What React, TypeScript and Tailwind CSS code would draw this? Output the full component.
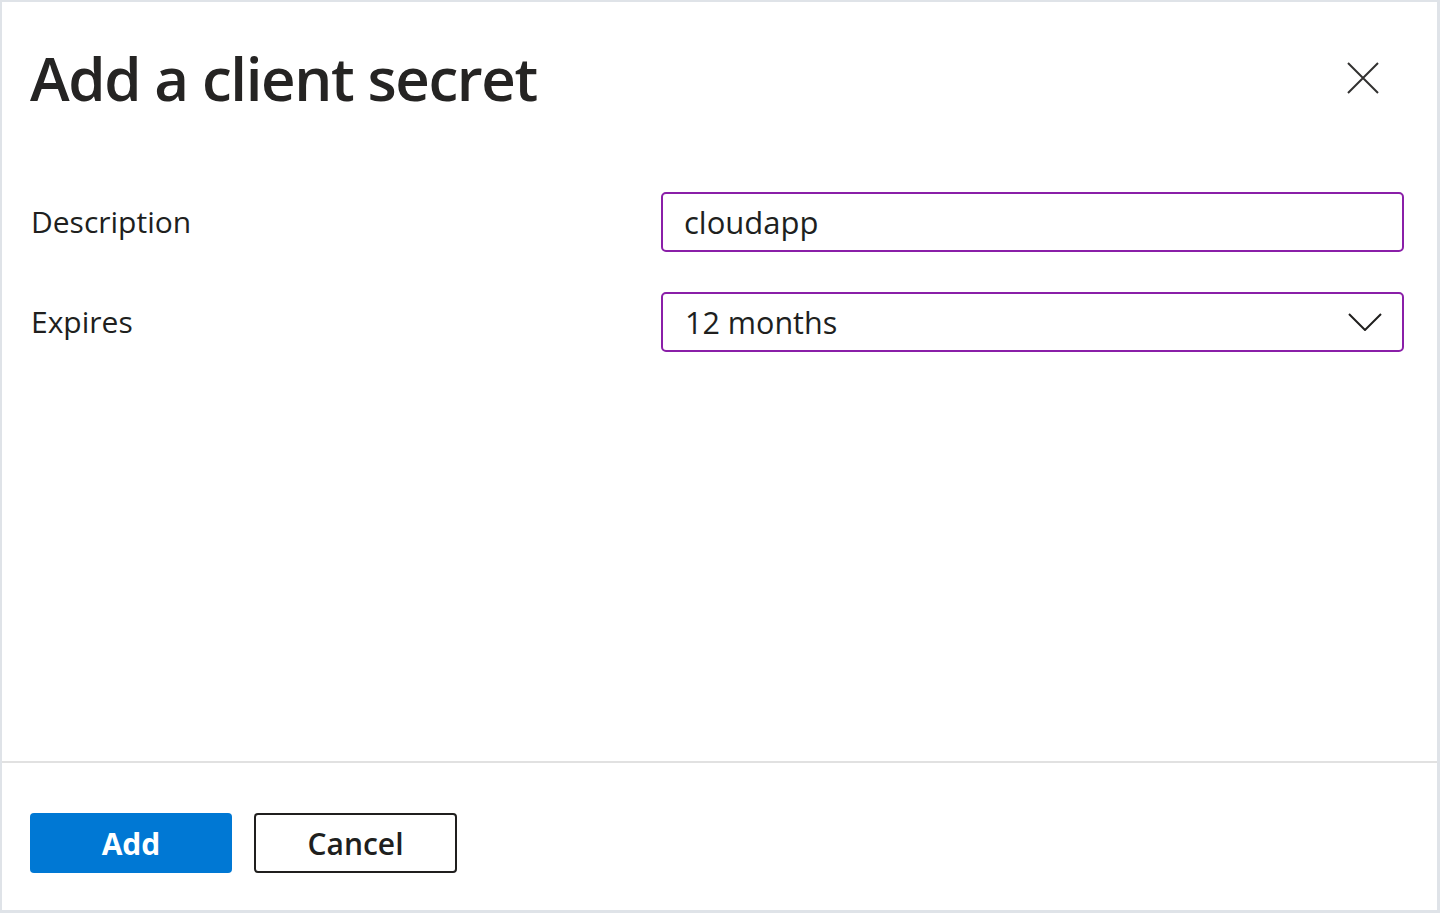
import React from 'react';

const font = { fontFamily: '"Open Sans", "Noto Sans", sans-serif' };

const CloseIcon = () => (
  <svg width="32" height="32" viewBox="0 0 32 32" fill="none">
    <path d="M1 1L31 31M31 1L1 31" stroke="#323130" strokeWidth="2" />
  </svg>
);

const Chevron = () => (
  <svg width="34" height="18" viewBox="0 0 34 18" fill="none">
    <path d="M1 1L17 17L33 1" stroke="#201f1e" strokeWidth="2" />
  </svg>
);

export default function App() {
  return (
    <div
      className="h-[913px] w-[1440px] bg-[#dfe3e8] pt-[2px] pl-[2px] pr-[3px] pb-[3px] overflow-hidden"
      style={font}
    >
      <div className="flex h-full flex-col bg-white text-[#201f1e]">
        {/* Header */}
        <div className="flex items-start justify-between pl-[28px] pr-[58px] pt-[38px]">
          <h1 className="text-[60px] font-semibold leading-[76px] tracking-[-1.4px] text-[#252423]">
            Add a client secret
          </h1>
          <button className="mt-[22px] p-0">
            <CloseIcon />
          </button>
        </div>

        {/* Form */}
        <div className="mt-[76px] flex flex-1 flex-col gap-[40px] pl-[29px] pr-[33px]">
          <div className="flex items-center">
            <label className="w-[630px] text-[30px] leading-[40px]">Description</label>
            <div className="flex h-[60px] flex-1 items-center rounded-[5px] border-2 border-[#8a1fa8] pl-[21px]">
              <span className="text-[31px] leading-[40px]">cloudapp</span>
            </div>
          </div>
          <div className="flex items-center">
            <label className="w-[630px] text-[30px] leading-[40px]">Expires</label>
            <div className="flex h-[60px] flex-1 items-center justify-between rounded-[5px] border-2 border-[#8a1fa8] pl-[22px] pr-[20px]">
              <span className="text-[30.5px] leading-[40px]">12 months</span>
              <Chevron />
            </div>
          </div>
        </div>

        {/* Footer */}
        <div className="flex h-[149px] items-start gap-[22px] border-t-2 border-[#e1e1e1] pl-[28px] pt-[50px]">
          <button className="h-[60px] w-[202px] rounded-[4px] bg-[#0078d4] text-[30px] font-bold text-white">
            Add
          </button>
          <button className="h-[60px] w-[203px] rounded-[4px] border-2 border-[#201f1e] bg-white text-[30px] font-semibold text-[#201f1e]">
            Cancel
          </button>
        </div>
      </div>
    </div>
  );
}
